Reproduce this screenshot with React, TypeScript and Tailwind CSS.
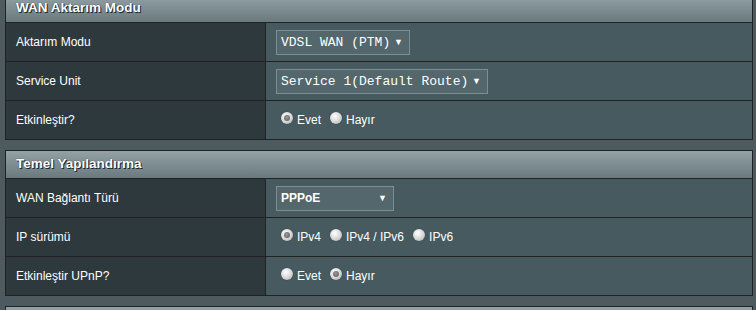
import React from 'react';

type Field =
  | { kind: 'select'; label: string; value: string; mono?: boolean; width: string }
  | { kind: 'radio'; label: string; options: string[]; checked: number };

interface Section {
  title: string;
  fields: Field[];
}

const sections: Section[] = [
  {
    title: 'WAN Aktarım Modu',
    fields: [
      { kind: 'select', label: 'Aktarım Modu', value: 'VDSL WAN (PTM)', mono: true, width: 'w-[134px]' },
      { kind: 'select', label: 'Service Unit', value: 'Service 1(Default Route)', mono: true, width: 'w-[212px]' },
      { kind: 'radio', label: 'Etkinleştir?', options: ['Evet', 'Hayır'], checked: 0 },
    ],
  },
  {
    title: 'Temel Yapılandırma',
    fields: [
      { kind: 'select', label: 'WAN Bağlantı Türü', value: 'PPPoE', width: 'w-[118px]' },
      { kind: 'radio', label: 'IP sürümü', options: ['IPv4', 'IPv4 / IPv6', 'IPv6'], checked: 0 },
      { kind: 'radio', label: 'Etkinleştir UPnP?', options: ['Evet', 'Hayır'], checked: 1 },
    ],
  },
];

const Radio: React.FC<{ on: boolean }> = ({ on }) => (
  <span className="ml-[5px] mr-[4px] mb-[4px] flex h-[12px] w-[12px] shrink-0 items-center justify-center rounded-full bg-[radial-gradient(circle_at_40%_35%,#ffffff,#d6d6d6_55%,#9a9a9a)] shadow-[0_0_1px_#2b3438]">
    {on && (
      <span className="h-[6px] w-[6px] rounded-full bg-[radial-gradient(circle_at_45%_40%,#9a9a9a,#555)]" />
    )}
  </span>
);

const Select: React.FC<{ value: string; mono?: boolean; width: string }> = ({ value, mono, width }) => (
  <div
    className={`flex h-[25px] ${width} items-center justify-between border border-[#7e8d92] bg-[#54676c] pl-[4px] pr-[6px] text-white`}
  >
    {mono ? (
      <span className="font-['Liberation_Mono','DejaVu_Sans_Mono',monospace] text-[13px] leading-none">{value}</span>
    ) : (
      <span className="text-[12px] font-bold leading-none">{value}</span>
    )}
    <span className="text-[9px] leading-none">▼</span>
  </div>
);

const Table: React.FC<{ section?: Section }> = ({ section }) => (
  <div className="border border-[#222] bg-[#475a5f]">
    <div className="flex h-[27px] items-center bg-gradient-to-b from-[#94a2a7] to-[#6a797e] px-[10px] text-[13.5px] font-bold text-white [text-shadow:1px_1px_0_#1e2629,0_0_1px_#1e2629]">
      {section?.title}
    </div>
    {section?.fields.map((f) => (
      <div key={f.label} className="grid h-[39px] grid-cols-[260px_1fr] border-t border-[#222]">
        <div className="flex items-center border-r border-[#222] bg-[#2e393d] px-[10px] text-[12px] text-white">
          {f.label}
        </div>
        <div className="flex items-center px-[10px] text-[12px] text-white">
          {f.kind === 'select' ? (
            <Select value={f.value} mono={f.mono} width={f.width} />
          ) : (
            f.options.map((o, i) => (
              <span key={o} className="mr-[4px] flex items-center">
                <Radio on={i === f.checked} />
                <span>{o}</span>
              </span>
            ))
          )}
        </div>
      </div>
    ))}
  </div>
);

export default function App() {
  return (
    <div className="h-[310px] w-[756px] overflow-hidden bg-[#4d5a60] font-['Liberation_Sans',Arial,sans-serif]">
      <div className="ml-[5px] -mt-[6px] flex w-[748px] flex-col gap-[10px]">
        {sections.map((s) => (
          <Table key={s.title} section={s} />
        ))}
        <Table />
      </div>
    </div>
  );
}
